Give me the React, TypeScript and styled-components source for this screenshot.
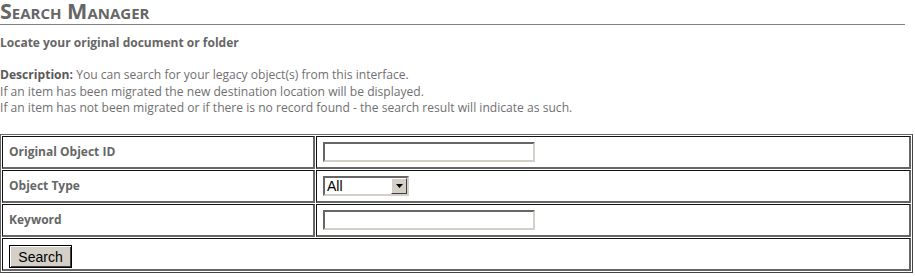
import React from "react";
import styled, { createGlobalStyle } from "styled-components";

const GlobalStyle = createGlobalStyle`
  body {
    margin: 0;
    background: #fff;
    font-family: "Open Sans", "Liberation Sans", sans-serif;
  }
`;

const Page = styled.div`
  display: flex;
  flex-direction: column;
  width: 913px;
`;

const Title = styled.h1`
  margin: 0;
  width: 905px;
  padding-top: 1px;
  padding-bottom: 3px;
  font-size: 21.5px;
  line-height: 20px;
  font-weight: 700;
  font-variant: small-caps;
  color: #666;
  border-bottom: 1px solid #808080;
`;

const SubTitle = styled.div`
  margin-top: 10px;
  font-size: 12px;
  line-height: 16px;
  font-weight: 700;
  color: #666;
`;

const Description = styled.div`
  margin-top: 16px;
  font-size: 12.1px;
  line-height: 16.5px;
  color: #707070;
  strong {
    color: #5a5a5a;
  }
`;

const FormTable = styled.table`
  margin-top: 17px;
  width: 913px;
  border-collapse: separate;
  border-spacing: 1px;
  border: 1px solid #666;
  border-right-color: #444;
  border-bottom-color: #444;
`;

const Cell = styled.td<{ $label?: boolean; $footer?: boolean }>`
  height: ${(p) => (p.$footer ? "24px" : "30px")};
  padding: ${(p) => (p.$footer ? "6px 6px 0" : "0 6px")};
  border: 1px solid #666;
  border-top-color: #111;
  border-left-color: #111;
  border-bottom: 2px solid #666;
  border-right: 2px solid #666;
  font-size: 12px;
  font-weight: 700;
  color: #666;
  width: ${(p) => (p.$label ? "298px" : "auto")};
`;

const TextBox = styled.input`
  display: block;
  box-sizing: border-box;
  width: 212px;
  height: 20px;
  margin: 0;
  border: 2px solid;
  border-color: #666 #d4d0c8 #d4d0c8 #666;
  background: #fff;
`;

const SelectWrap = styled.div`
  position: relative;
  box-sizing: border-box;
  width: 86px;
  height: 20px;
  border: 2px solid;
  border-color: #666 #d4d0c8 #d4d0c8 #666;
  background: #fff;
`;

const Select = styled.select`
  appearance: none;
  width: 100%;
  height: 100%;
  border: 0;
  padding: 0 0 0 2px;
  margin: 0;
  background: transparent;
  font-family: "Liberation Sans", Arial, sans-serif;
  font-size: 14px;
  color: #000;
  outline: none;
`;

const ArrowButton = styled.div`
  position: absolute;
  top: 0;
  right: 0;
  box-sizing: border-box;
  width: 16px;
  height: 16px;
  background: #d4d0c8;
  border: 1px solid;
  border-color: #fff #404040 #404040 #fff;
  display: flex;
  align-items: center;
  justify-content: center;
  pointer-events: none;
`;

const Button = styled.button`
  display: block;
  box-sizing: border-box;
  width: 63px;
  height: 23px;
  margin: 0;
  padding: 0;
  background: #d4d0c8;
  border: 1px solid #000;
  box-shadow: inset 1px 1px 0 #fff, inset -1px -1px 0 #404040;
  font-family: "Liberation Sans", Arial, sans-serif;
  font-size: 14px;
  color: #000;
`;

const fields = [
  { label: "Original Object ID", kind: "text" },
  { label: "Object Type", kind: "select" },
  { label: "Keyword", kind: "text" },
];

export default function App() {
  return (
    <Page>
      <GlobalStyle />
      <Title>Search Manager</Title>
      <SubTitle>Locate your original document or folder</SubTitle>
      <Description>
        <strong>Description:</strong> You can search for your legacy object(s) from this interface.
        <br />
        If an item has been migrated the new destination location will be displayed.
        <br />
        If an item has not been migrated or if there is no record found - the search result will indicate as such.
      </Description>
      <FormTable>
        <tbody>
          {fields.map((f) => (
            <tr key={f.label}>
              <Cell $label>{f.label}</Cell>
              <Cell>
                {f.kind === "text" ? (
                  <TextBox type="text" />
                ) : (
                  <SelectWrap>
                    <Select defaultValue="All">
                      <option>All</option>
                    </Select>
                    <ArrowButton>
                      <svg width="7" height="4" viewBox="0 0 7 4">
                        <path d="M0 0h7L3.5 4z" fill="#000" />
                      </svg>
                    </ArrowButton>
                  </SelectWrap>
                )}
              </Cell>
            </tr>
          ))}
          <tr>
            <Cell colSpan={2} $footer>
              <Button type="button">Search</Button>
            </Cell>
          </tr>
        </tbody>
      </FormTable>
    </Page>
  );
}
